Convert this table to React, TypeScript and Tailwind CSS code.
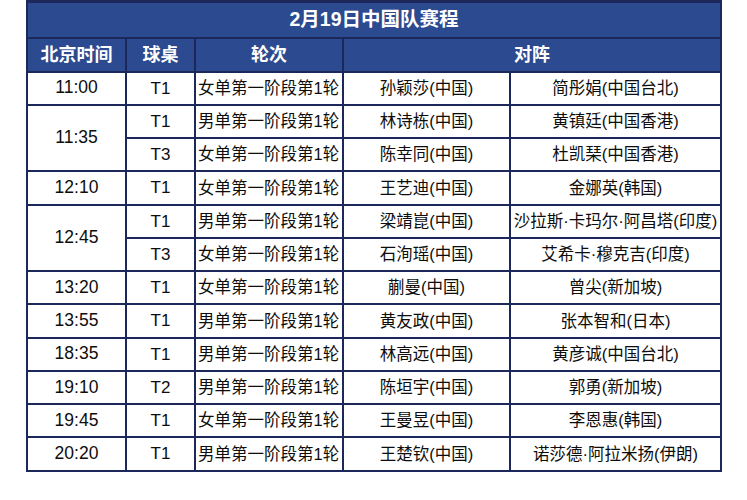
import React from "react";

type Row = { time?: string; span?: number; table: string; round: string; a: string; b: string };

const rows: Row[] = [
  { time: "11:00", span: 1, table: "T1", round: "女单第一阶段第1轮", a: "孙颖莎(中国)", b: "简彤娟(中国台北)" },
  { time: "11:35", span: 2, table: "T1", round: "男单第一阶段第1轮", a: "林诗栋(中国)", b: "黄镇廷(中国香港)" },
  { table: "T3", round: "女单第一阶段第1轮", a: "陈幸同(中国)", b: "杜凯琹(中国香港)" },
  { time: "12:10", span: 1, table: "T1", round: "女单第一阶段第1轮", a: "王艺迪(中国)", b: "金娜英(韩国)" },
  { time: "12:45", span: 2, table: "T1", round: "男单第一阶段第1轮", a: "梁靖崑(中国)", b: "沙拉斯·卡玛尔·阿昌塔(印度)" },
  { table: "T3", round: "女单第一阶段第1轮", a: "石洵瑶(中国)", b: "艾希卡·穆克吉(印度)" },
  { time: "13:20", span: 1, table: "T1", round: "女单第一阶段第1轮", a: "蒯曼(中国)", b: "曾尖(新加坡)" },
  { time: "13:55", span: 1, table: "T1", round: "男单第一阶段第1轮", a: "黄友政(中国)", b: "张本智和(日本)" },
  { time: "18:35", span: 1, table: "T1", round: "男单第一阶段第1轮", a: "林高远(中国)", b: "黄彦诚(中国台北)" },
  { time: "19:10", span: 1, table: "T2", round: "男单第一阶段第1轮", a: "陈垣宇(中国)", b: "郭勇(新加坡)" },
  { time: "19:45", span: 1, table: "T1", round: "女单第一阶段第1轮", a: "王曼昱(中国)", b: "李恩惠(韩国)" },
  { time: "20:20", span: 1, table: "T1", round: "男单第一阶段第1轮", a: "王楚钦(中国)", b: "诺莎德·阿拉米扬(伊朗)" },
];

const font = { fontFamily: '"Liberation Sans", "Noto Sans CJK SC", sans-serif' };

export default function App() {
  const td = "border-2 border-[#1c2859] text-center align-middle p-0 whitespace-nowrap";
  const th = "border-2 border-[#1c2859] text-center align-middle p-0 font-bold text-white text-[18px] whitespace-nowrap";
  return (
    <div className="w-[747px] h-[500px] bg-white" style={font}>
      <div className="ml-[26px] pt-0">
        <table className="table-fixed border-collapse w-[694px] text-[#0d0d0d] text-[16.5px] leading-none">
          <colgroup>
            <col className="w-[99px]" />
            <col className="w-[69px]" />
            <col className="w-[148px]" />
            <col className="w-[167px]" />
            <col className="w-[211px]" />
          </colgroup>
          <thead>
            <tr className="h-[36px] bg-[#2c4a8f]">
              <th colSpan={5} className={th + " text-[19.5px] border-t-[3px]"}>2月19日中国队赛程</th>
            </tr>
            <tr className="h-[34px] bg-[#2c4a8f]">
              <th className={th}>北京时间</th>
              <th className={th}>球桌</th>
              <th className={th}>轮次</th>
              <th colSpan={2} className={th}>对阵</th>
            </tr>
          </thead>
          <tbody>
            {rows.map((r, i) => (
              <tr key={i} className="h-[33.25px]">
                {r.time && (
                  <td rowSpan={r.span} className={td + " text-[17.5px]"}>{r.time}</td>
                )}
                <td className={td + " text-[17px]"}>{r.table}</td>
                <td className={td + " text-left pl-[2px]"}>{r.round}</td>
                <td className={td}>{r.a}</td>
                <td className={td}>{r.b}</td>
              </tr>
            ))}
          </tbody>
        </table>
      </div>
    </div>
  );
}
